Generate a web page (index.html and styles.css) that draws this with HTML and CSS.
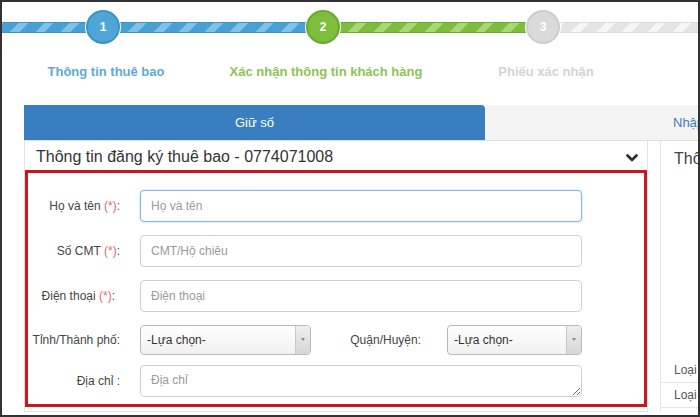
FILE: index.html
```html
<!DOCTYPE html>
<html lang="vi">
<head>
<meta charset="utf-8">
<title>Đăng ký thuê bao</title>
<link rel="stylesheet" href="styles.css">
</head>
<body>
<div class="frame">
  <div class="stepper">
    <div class="track">
      <div class="seg seg-blue seg-first"></div>
      <div class="circle c-blue">1</div>
      <div class="seg seg-blue seg-mid"></div>
      <div class="circle c-green">2</div>
      <div class="seg seg-green seg-mid"></div>
      <div class="circle c-gray">3</div>
      <div class="seg seg-gray seg-last"></div>
    </div>
    <div class="labels">
      <div class="lbl l-blue">Thông tin thuê bao</div>
      <div class="lbl l-green">Xác nhận thông tin khách hàng</div>
      <div class="lbl l-gray">Phiếu xác nhận</div>
    </div>
  </div>

  <div class="tabs">
    <div class="tab active">Giữ số</div>
    <div class="tab inactive">Nhập thông tin</div>
  </div>

  <div class="content">
    <div class="main">
      <div class="main-head">
        <span>Thông tin đăng ký thuê bao - 0774071008</span>
        <svg class="chev" width="12" height="8" viewBox="0 0 12 8"><polyline points="1.5,1.5 6,6 10.5,1.5" fill="none" stroke="#2b2b2b" stroke-width="2.6" stroke-linecap="round" stroke-linejoin="round"/></svg>
      </div>
      <div class="redbox">
        <div class="row">
          <label class="lab">Họ và tên <span class="req">(*)</span>:</label>
          <input class="inp focus" type="text" placeholder="Họ và tên">
        </div>
        <div class="row">
          <label class="lab">Số CMT <span class="req">(*)</span>:</label>
          <input class="inp" type="text" placeholder="CMT/Hộ chiêu">
        </div>
        <div class="row">
          <label class="lab lab-dt">Điện thoại <span class="req">(*)</span>:</label>
          <input class="inp" type="text" placeholder="Điện thoại">
        </div>
        <div class="row row-sel">
          <label class="lab">Tỉnh/Thành phố:</label>
          <div class="select sel-1"><span class="sel-text">-Lựa chọn-</span><span class="sel-arrow"></span></div>
          <label class="lab lab-q">Quận/Huyện:</label>
          <div class="select sel-2"><span class="sel-text">-Lựa chọn-</span><span class="sel-arrow"></span></div>
        </div>
        <div class="row row-last">
          <label class="lab">Địa chỉ :</label>
          <textarea class="inp ta" placeholder="Địa chỉ"></textarea>
        </div>
      </div>
    </div>
    <div class="side">
      <div class="side-title">Thông tin thuê bao</div>
      <div class="side-list">
        <div class="side-item">Loại thuê bao</div>
        <div class="side-item">Loại số</div>
      </div>
    </div>
  </div>
</div>
</body>
</html>
```

FILE: styles.css
```css
* { box-sizing: border-box; }
html, body { margin: 0; padding: 0; background: #fff; }
body { font-family: "Liberation Sans", Arial, sans-serif; color: #333; }

.frame {
  width: 700px;
  height: 417px;
  border: 2px solid #333;
  overflow: hidden;
  background: #fff;
}

/* ---------- stepper ---------- */
.stepper { padding-top: 8px; }
.track { display: flex; align-items: center; height: 34px; }
.seg { height: 11px; flex: none; }
.seg-first { width: 84px; }
.seg-mid { width: 186px; }
.seg-last { flex: 1; }
.seg-blue {
  background: repeating-linear-gradient(-45deg, #49a1d3 0 11px, #80c2e6 11px 18px);
  border-top: 1px solid #3f93c4;
  border-bottom: 1px solid #3f93c4;
}
.seg-green {
  background: repeating-linear-gradient(-45deg, #7dbc3c 0 11px, #a9d775 11px 18px);
  border-top: 1px solid #6eab32;
  border-bottom: 1px solid #6eab32;
}
.seg-gray {
  background: repeating-linear-gradient(-45deg, #e4e4e4 0 11px, #f6f6f6 11px 18px);
  border-top: 1px solid #dcdcdc;
  border-bottom: 1px solid #dcdcdc;
}
.circle {
  flex: none;
  width: 34px;
  height: 34px;
  border-radius: 50%;
  display: flex;
  align-items: center;
  justify-content: center;
  color: #fff;
  font-weight: bold;
  font-size: 12px;
  box-shadow: 0 0 0 1px #fff;
  position: relative;
}
.c-blue { background: #4ea6d6; border: 2px solid #3b92c4; }
.c-green { background: #7fbd3d; border: 2px solid #6aa92e; }
.c-gray { background: #dadada; border: 2px solid #cdcdcd; }

.labels { display: flex; margin-left: -6px; margin-top: 20px; }
.lbl {
  flex: none;
  width: 220px;
  text-align: center;
  font-weight: bold;
  font-size: 13px;
  line-height: 16px;
}
.l-blue { color: #5ea9d6; }
.l-green { color: #8dc355; }
.l-gray { color: #d3d3d3; }

/* ---------- tabs ---------- */
.tabs {
  display: flex;
  margin: 25px 0 0 22px;
  height: 36px;
  border-bottom: 1px solid #dedede;
}
.tab { font-size: 13px; line-height: 35px; white-space: nowrap; overflow: hidden; }
.tab.active {
  flex: none;
  width: 461px;
  background: #3a7ec2;
  color: #fff;
  text-align: center;
  border-radius: 0 4px 0 0;
}
.tab.inactive {
  flex: 1;
  min-width: 0;
  background: #f4f4f4;
  color: #3a7ec2;
  padding-left: 188px;
}

/* ---------- content ---------- */
.content { display: flex; margin-left: 22px; }
.main {
  flex: none;
  width: 624px;
  border: 1px solid #e2e2e2;
  border-top: none;
  padding-bottom: 4px;
}
.main-head {
  height: 29px;
  display: flex;
  align-items: center;
  justify-content: space-between;
  padding: 3px 9px 0 11px;
  font-size: 16px;
  color: #333;
}
.chev { margin-top: 2px; }

.redbox {
  border: 3px solid #c8171d;
  padding: 17px 0 7px 0;
}
.row { display: flex; align-items: center; margin-bottom: 13px; }
.row-sel { margin-bottom: 10px; }
.row-last { margin-bottom: 0; }
.lab {
  flex: none;
  width: 92px;
  text-align: right;
  font-size: 12px;
  color: #444;
  margin-right: 20px;
  white-space: nowrap;
}
.lab-dt { padding-right: 5px; }
.req { color: #e06a6a; }
.lab-q { width: 110px; margin-right: 26px; }

.inp {
  flex: none;
  width: 442px;
  height: 32px;
  border: 1px solid #d0d0d0;
  border-radius: 4px;
  padding: 0 10px;
  font-family: "Liberation Sans", Arial, sans-serif;
  font-size: 12px;
  color: #555;
  background: #fff;
  outline: none;
}
.inp::placeholder { color: #9a9a9a; }
.inp.focus {
  border-color: #86b7df;
  box-shadow: 0 0 3px rgba(102, 175, 233, 0.45);
}
.ta { resize: vertical; padding-top: 6px; line-height: 16px; }

.select {
  flex: none;
  height: 30px;
  display: flex;
  align-items: stretch;
  border: 1px solid #b9b9b9;
  border-radius: 4px;
  background: linear-gradient(#ffffff, #f1f1f1);
  font-size: 12px;
  color: #333;
  overflow: hidden;
}
.sel-1 { width: 171px; }
.sel-2 { width: 135px; }
.sel-text { flex: 1; padding-left: 6px; line-height: 28px; }
.sel-arrow {
  width: 15px;
  border-left: 1px solid #c9c9c9;
  background: linear-gradient(#eeeeee, #d6d6d6);
  position: relative;
}
.sel-arrow::after {
  content: "";
  position: absolute;
  left: 5px;
  top: 12px;
  border-left: 2px solid transparent;
  border-right: 2px solid transparent;
  border-top: 3px solid #8a8a8a;
}

/* ---------- side ---------- */
.side {
  margin-left: 12px;
  flex: 1;
  min-width: 0;
  border-left: 1px solid #e4e4e4;
  display: flex;
  flex-direction: column;
  padding-bottom: 4px;
  white-space: nowrap;
  overflow: hidden;
}
.side-title {
  height: 29px;
  line-height: 29px;
  padding: 3px 0 0 13px;
  font-size: 16px;
  color: #444;
}
.side-list { margin-top: auto; }
.side-item {
  height: 25px;
  line-height: 24px;
  padding-left: 13px;
  font-size: 12px;
  color: #555;
  border-bottom: 1px solid #e4e4e4;
}
```
